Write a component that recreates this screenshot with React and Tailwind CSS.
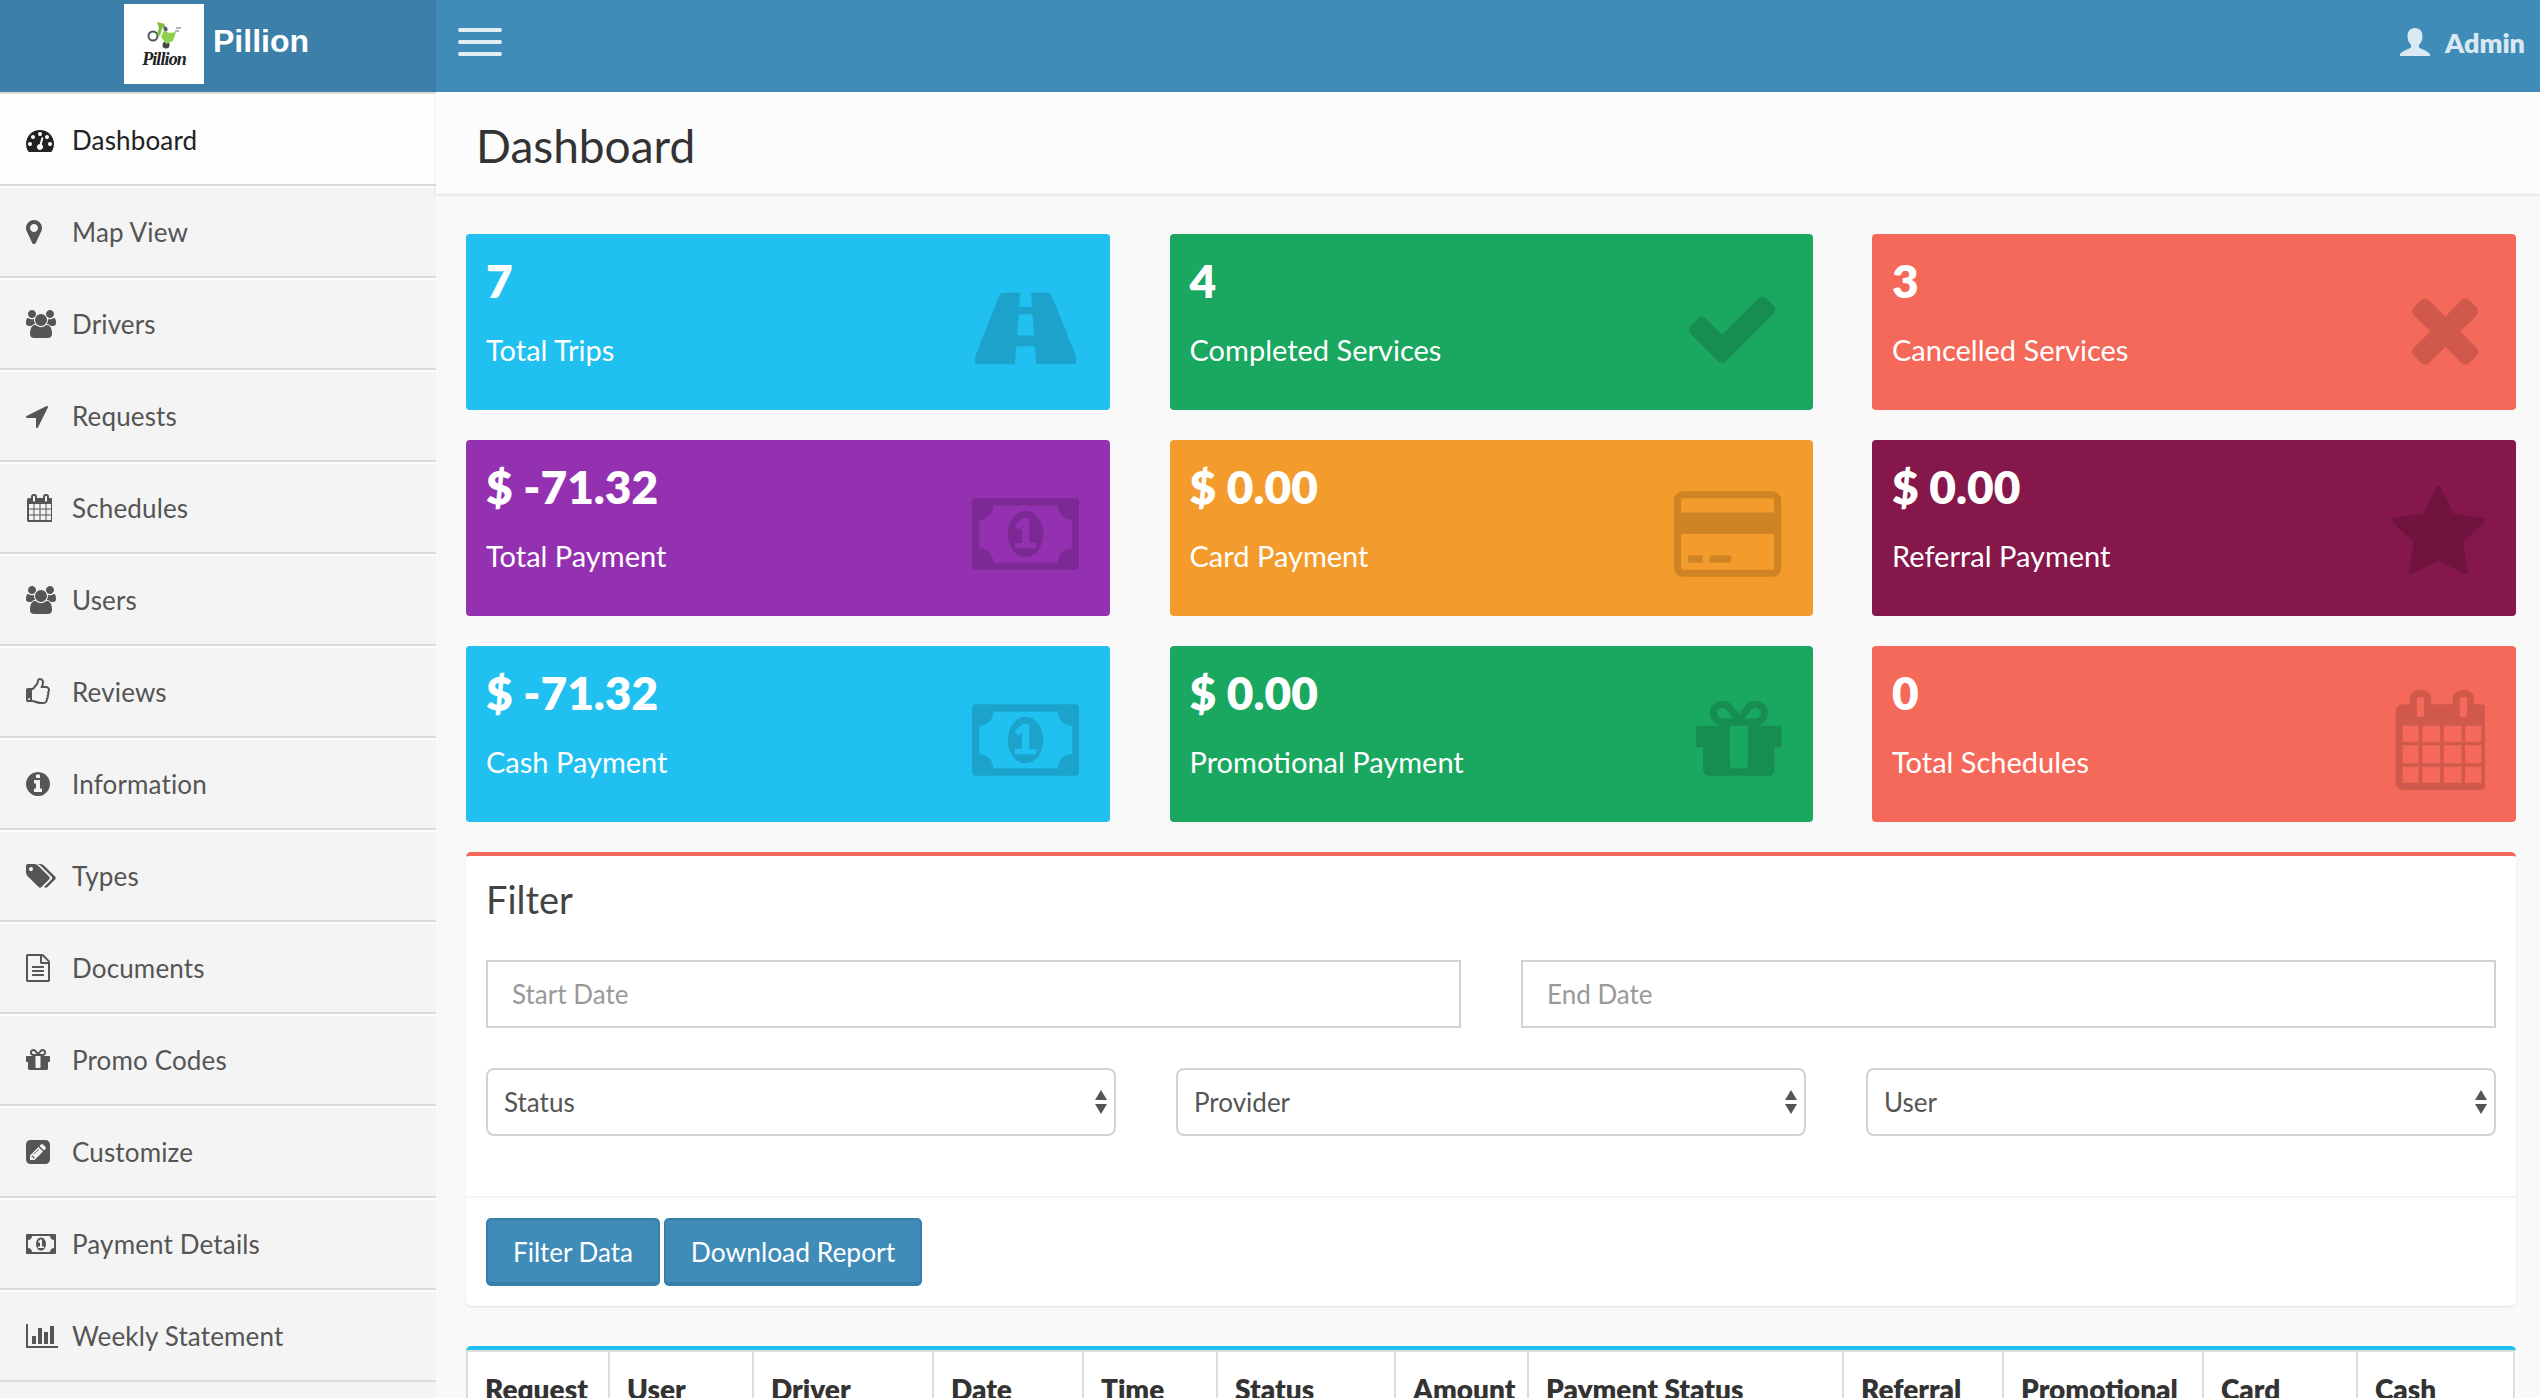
import React from "react";

const P = {
  tach: "M384 1152q0-53-37.5-90.5t-90.5-37.5-90.5 37.5-37.5 90.5 37.5 90.5 90.5 37.5 90.5-37.5 37.5-90.5zm192-448q0-53-37.5-90.5t-90.5-37.5-90.5 37.5-37.5 90.5 37.5 90.5 90.5 37.5 90.5-37.5 37.5-90.5zm428 481l101-382q6-26-7.5-48.5t-38.5-29.5-48 6.5-30 39.5l-101 382q-60 5-107 43.5t-63 98.5q-20 77 20 146t117 89 146-20 89-117q16-60-6-117t-72-91zm660-33q0-53-37.5-90.5t-90.5-37.5-90.5 37.5-37.5 90.5 37.5 90.5 90.5 37.5 90.5-37.5 37.5-90.5zm-640-640q0-53-37.5-90.5t-90.5-37.5-90.5 37.5-37.5 90.5 37.5 90.5 90.5 37.5 90.5-37.5 37.5-90.5zm448 192q0-53-37.5-90.5t-90.5-37.5-90.5 37.5-37.5 90.5 37.5 90.5 90.5 37.5 90.5-37.5 37.5-90.5zm320 448q0 261-141 483-19 29-54 29h-1402q-35 0-54-29-141-221-141-483 0-182 71-348t191-286 286-191 348-71 348 71 286 191 191 286 71 348z",
  marker: "M1152 640q0-106-75-181t-181-75-181 75-75 181 75 181 181 75 181-75 75-181zm256 0q0 109-33 179l-364 774q-16 33-47.5 52t-67.5 19-67.5-19-46.5-52l-365-774q-33-70-33-179 0-212 150-362t362-150 362 150 150 362z",
  users: "M593 896q-162 5-265 128h-134q-82 0-138-40.5t-56-118.5q0-353 124-353 6 0 43.5 21t97.5 42.5 119 21.5q67 0 133-23-5 37-5 66 0 139 81 256zm1071 637q0 120-73 189.5t-194 69.5h-874q-121 0-194-69.5t-73-189.5q0-53 3.5-103.5t14-109 26.5-108.5 43-97.5 62-81 85.5-53.5 111.5-20q10 0 43 21.5t73 48 107 48 135 21.5 135-21.5 107-48 73-48 43-21.5q61 0 111.5 20t85.5 53.5 62 81 43 97.5 26.5 108.5 14 109 3.5 103.5zm-1024-1277q0 106-75 181t-181 75-181-75-75-181 75-181 181-75 181 75 75 181zm704 384q0 159-112.5 271.5t-271.5 112.5-271.5-112.5-112.5-271.5 112.5-271.5 271.5-112.5 271.5 112.5 112.5 271.5zm576 225q0 78-56 118.5t-138 40.5h-134q-103-123-265-128 81-117 81-256 0-29-5-66 66 23 133 23 59 0 119-21.5t97.5-42.5 43.5-21q124 0 124 353zm-128-609q0 106-75 181t-181 75-181-75-75-181 75-181 181-75 181 75 75 181z",
  arrow: "M1593 349l-640 1280q-17 35-57 35-5 0-15-2-22-5-35.5-22.5t-13.5-39.5v-576h-576q-22 0-39.5-13.5t-22.5-35.5 4-42 29-30l1280-640q13-7 29-7 27 0 45 19 15 14 18.5 34.5t-6.5 39.5z",
  calendar: "M192 1664h288v-288h-288v288zm352 0h320v-288h-320v288zm-352-352h288v-320h-288v320zm352 0h320v-320h-320v320zm-352-384h288v-288h-288v288zm736 736h320v-288h-320v288zm-384-736h320v-288h-320v288zm768 736h288v-288h-288v288zm-384-352h320v-320h-320v320zm-352-864v-288q0-13-9.5-22.5t-22.5-9.5h-64q-13 0-22.5 9.5t-9.5 22.5v288q0 13 9.5 22.5t22.5 9.5h64q13 0 22.5-9.5t9.5-22.5zm736 864h288v-320h-288v320zm-384-384h320v-288h-320v288zm384 0h288v-288h-288v288zm32-480v-288q0-13-9.5-22.5t-22.5-9.5h-64q-13 0-22.5 9.5t-9.5 22.5v288q0 13 9.5 22.5t22.5 9.5h64q13 0 22.5-9.5t9.5-22.5zm384-64v1280q0 52-38 90t-90 38h-1408q-52 0-90-38t-38-90v-1280q0-52 38-90t90-38h128v-96q0-66 47-113t113-47h64q66 0 113 47t47 113v96h384v-96q0-66 47-113t113-47h64q66 0 113 47t47 113v96h128q52 0 90 38t38 90z",
  thumb: "M384 1344q0-26-19-45t-45-19-45 19-19 45 19 45 45 19 45-19 19-45zm1152-576q0-51-39-89.5t-89-38.5h-352q0-58 48-159.5t48-160.5q0-98-32-145t-128-47q-26 26-38 85t-30.5 125.5-59.5 109.5q-22 23-77 91-4 5-23 30t-31.5 41-34.5 42.5-40 44-38.5 35.5-40 27-35.5 9h-32v640h32q13 0 31.5 3t33 6.5 38 11 35 11.5 35.5 12.5 29 10.5q211 73 342 73h121q192 0 192-167 0-26-5-56 30-16 47.5-52.5t17.5-73.5-18-69q53-50 53-119 0-25-10-55.5t-25-47.5q32-1 53.5-47t21.5-81zm128-1q0 89-49 163 9 33 9 69 0 77-38 144 3 21 3 43 0 101-60 178 1 139-85 219.5t-227 80.5h-129q-96 0-189.5-22.5t-216.5-65.5q-116-40-138-40h-288q-53 0-90.5-37.5t-37.5-90.5v-640q0-53 37.5-90.5t90.5-37.5h274q36-24 137-155 58-75 107-128 24-25 35.5-85.5t30.5-126.5 62-108q39-37 90-37 84 0 151 32.5t102 101.5 35 186q0 93-48 192h176q104 0 180 76t76 179z",
  info: "M1152 1376v-160q0-14-9-23t-23-9h-96v-512q0-14-9-23t-23-9h-320q-14 0-23 9t-9 23v160q0 14 9 23t23 9h96v320h-96q-14 0-23 9t-9 23v160q0 14 9 23t23 9h448q14 0 23-9t9-23zm-128-896v-160q0-14-9-23t-23-9h-192q-14 0-23 9t-9 23v160q0 14 9 23t23 9h192q14 0 23-9t9-23zm640 416q0 209-103 385.5t-279.5 279.5-385.5 103-385.5-103-279.5-279.5-103-385.5 103-385.5 279.5-279.5 385.5-103 385.5 103 279.5 279.5 103 385.5z",
  tags: "M448 448q0-53-37.5-90.5t-90.5-37.5-90.5 37.5-37.5 90.5 37.5 90.5 90.5 37.5 90.5-37.5 37.5-90.5zm1067 576q0 53-37 90l-491 492q-39 37-91 37-53 0-90-37l-715-716q-38-37-64.5-101t-26.5-117v-416q0-52 38-90t90-38h416q53 0 117 26.5t102 64.5l715 714q37 39 37 91zm384 0q0 53-37 90l-491 492q-39 37-91 37-36 0-59-14t-53-45l470-470q37-37 37-90 0-52-37-91l-715-714q-38-38-102-64.5t-117-26.5h224q53 0 117 26.5t102 64.5l715 714q37 39 37 91z",
  file: "M1596 380q28 28 48 76t20 88v1152q0 40-28 68t-68 28h-1344q-40 0-68-28t-28-68v-1600q0-40 28-68t68-28h896q40 0 88 20t76 48zm-444-244v376h376q-10-29-22-41l-313-313q-12-12-41-22zm384 1528v-1024h-416q-40 0-68-28t-28-68v-416h-768v1536h1280zm-1024-864q0-14 9-23t23-9h704q14 0 23 9t9 23v64q0 14-9 23t-23 9h-704q-14 0-23-9t-9-23v-64zm736 224q14 0 23 9t9 23v64q0 14-9 23t-23 9h-704q-14 0-23-9t-9-23v-64q0-14 9-23t23-9h704zm0 256q14 0 23 9t9 23v64q0 14-9 23t-23 9h-704q-14 0-23-9t-9-23v-64q0-14 9-23t23-9h704z",
  gift: "M1056 1356v-716h-320v716q0 25 18 38.5t46 13.5h192q28 0 46-13.5t18-38.5zm-456-844h195l-126-161q-26-31-69-31-40 0-68 28t-28 68 28 68 68 28zm688-96q0-40-28-68t-68-28q-43 0-69 31l-125 161h194q40 0 68-28t28-68zm376 256v320q0 14-9 23t-23 9h-96v416q0 40-28 68t-68 28h-1088q-40 0-68-28t-28-68v-416h-96q-14 0-23-9t-9-23v-320q0-14 9-23t23-9h440q-93 0-158.5-65.5t-65.5-158.5 65.5-158.5 158.5-65.5q107 0 168 77l128 165 128-165q61-77 168-77 93 0 158.5 65.5t65.5 158.5-65.5 158.5-158.5 65.5h440q14 0 23 9t9 23z",
  pencil: "M404 980l152 152-52 52h-56v-96h-96v-56zm414-390q14 13-3 30l-291 291q-17 17-30 3-14-13 3-30l291-291q17-17 30-3zm-274 690l544-544-288-288-544 544v288h288zm608-608l92-92q28-28 28-68t-28-68l-152-152q-28-28-68-28t-68 28l-92 92zm384-384v960q0 119-84.5 203.5t-203.5 84.5h-960q-119 0-203.5-84.5t-84.5-203.5v-960q0-119 84.5-203.5t203.5-84.5h960q119 0 203.5 84.5t84.5 203.5z",
  money: "M768 1152h384v-96h-128v-448h-114l-148 137 77 80q42-37 55-57h2v288h-128v96zm512-256q0 70-21 142t-59.5 134-101.5 101-138 39-138-39-101.5-101-59.5-134-21-142 21-142 59.5-134 101.5-101 138-39 138 39 101.5 101 59.5 134 21 142zm512 256v-512q-106 0-181-75t-75-181h-1152q0 106-75 181t-181 75v512q106 0 181 75t75 181h1152q0-106 75-181t181-75zm128-832v1152q0 26-19 45t-45 19h-1792q-26 0-45-19t-19-45v-1152q0-26 19-45t45-19h1792q26 0 45 19t19 45z",
  chart: "M640 896v512h-256v-512h256zm384-512v1024h-256v-1024h256zm1024 1152v128h-2048v-1536h128v1408h1920zm-640-896v768h-256v-768h256zm384-384v1152h-256v-1152h256z",
  road: "M1111 1004v-4l-24-320q-1-13-11-22.5t-23-9.5h-186q-13 0-23 9.5t-11 22.5l-24 320v4q-1 12 8 20t21 8h244q12 0 21-8t8-20zm759 467q0 73-46 73h-704q13 0 22-9.5t8-22.5l-20-256q-1-13-11-22.5t-23-9.5h-272q-13 0-23 9.5t-11 22.5l-20 256q-1 13 8 22.5t22 9.5h-704q-46 0-46-73 0-54 26-116l417-1044q8-19 26-33t38-14h339q-13 0-23 9.5t-11 22.5l-15 192q-1 14 8 23t22 9h166q13 0 22-9t8-23l-15-192q-1-13-11-22.5t-23-9.5h339q20 0 38 14t26 33l417 1044q26 62 26 116z",
  check: "M1671 566q0 40-28 68l-724 724-136 136q-28 28-68 28t-68-28l-136-136-362-362q-28-28-28-68t28-68l136-136q28-28 68-28t68 28l294 295 656-657q28-28 68-28t68 28l136 136q28 28 28 68z",
  times: "M1490 1322q0 40-28 68l-136 136q-28 28-68 28t-68-28l-294-294-294 294q-28 28-68 28t-68-28l-136-136q-28-28-28-68t28-68l294-294-294-294q-28-28-28-68t28-68l136-136q28-28 68-28t68 28l294 294 294-294q28-28 68-28t68 28l136 136q28 28 28 68t-28 68l-294 294 294 294q28 28 28 68z",
  star: "M1728 647q0 22-26 48l-363 354 86 500q1 7 1 20 0 21-10.5 35.5t-30.5 14.5q-19 0-40-12l-449-236-449 236q-22 12-40 12-21 0-31.5-14.5t-10.5-35.5q0-6 2-20l86-500-364-354q-25-27-25-48 0-37 56-46l502-73 225-455q19-41 49-41t49 41l225 455 502 73q56 9 56 46z",
  card: "M1760 128q66 0 113 47t47 113v1216q0 66-47 113t-113 47h-1600q-66 0-113-47t-47-113v-1216q0-66 47-113t113-47h1600zm-1600 128q-13 0-22.5 9.5t-9.5 22.5v224h1664v-224q0-13-9.5-22.5t-22.5-9.5h-1600zm1600 1280q13 0 22.5-9.5t9.5-22.5v-608h-1664v608q0 13 9.5 22.5t22.5 9.5h1600zm-1504-128v-128h256v128h-256zm384 0v-128h384v128h-384z",
};

function Glyph({ d, box, h, className }) {
  const [, , w, vh] = box.split(" ").map(Number);
  return (
    <svg viewBox={box} height={h} width={(w / vh) * h} className={className} fill="currentColor">
      <path d={d} />
    </svg>
  );
}

const menu = [
  ["Dashboard", P.tach, "0 0 1792 1792"],
  ["Map View", P.marker, "384 0 1024 1792"],
  ["Drivers", P.users, "0 0 1920 1792"],
  ["Requests", P.arrow, "192 0 1408 1792"],
  ["Schedules", P.calendar, "0 0 1664 1792"],
  ["Users", P.users, "0 0 1920 1792"],
  ["Reviews", P.thumb, "128 0 1536 1792"],
  ["Information", P.info, "128 0 1536 1792"],
  ["Types", P.tags, "0 0 1920 1792"],
  ["Documents", P.file, "128 0 1536 1792"],
  ["Promo Codes", P.gift, "128 0 1536 1792"],
  ["Customize", P.pencil, "0 -128 1536 1792"],
  ["Payment Details", P.money, "0 0 1920 1792"],
  ["Weekly Statement", P.chart, "0 0 2048 1792"],
];

const cards = [
  ["7", "Total Trips", "bg-[#20c0f0]", P.road, "0 0 1920 1792"],
  ["4", "Completed Services", "bg-[#1aa760]", P.check, "0 0 1792 1792"],
  ["3", "Cancelled Services", "bg-[#f5695a]", P.times, "192 0 1408 1792"],
  ["$ -71.32", "Total Payment", "bg-[#9331b0]", P.money, "0 0 1920 1792"],
  ["$ 0.00", "Card Payment", "bg-[#f39b2c]", P.card, "0 0 1920 1792"],
  ["$ 0.00", "Referral Payment", "bg-[#85174a]", P.star, "64 0 1664 1792"],
  ["$ -71.32", "Cash Payment", "bg-[#20c0f0]", P.money, "0 0 1920 1792"],
  ["$ 0.00", "Promotional Payment", "bg-[#1aa760]", P.gift, "128 0 1536 1792"],
  ["0", "Total Schedules", "bg-[#f5695a]", P.calendar, "0 0 1664 1792"],
];

const cols = [
  ["Request", "w-[142px]"],
  ["User", "w-[144px]"],
  ["Driver", "w-[180px]"],
  ["Date", "w-[150px]"],
  ["Time", "w-[134px]"],
  ["Status", "w-[178px]"],
  ["Amount", "w-[133px]"],
  ["Payment Status", "w-[315px]"],
  ["Referral", "w-[160px]"],
  ["Promotional", "w-[200px]"],
  ["Card", "w-[154px]"],
  ["Cash", "w-[157px]"],
];

function Select({ label }) {
  return (
    <div className="relative">
      <select className="block h-[68px] w-full appearance-none rounded-lg border-2 border-[#d2d2d2] bg-white pl-[16px] text-[26px] text-[#555]">
        <option>{label}</option>
      </select>
      <svg viewBox="0 0 14 24" width="14" height="24" className="pointer-events-none absolute right-[8px] top-[22px] text-[#555]" fill="currentColor">
        <path d="M7 0l6 10H1zM1 14h12L7 24z" />
      </svg>
    </div>
  );
}

function Logo() {
  return (
    <div className="flex h-[80px] w-[80px] flex-col items-center bg-white pt-[17px]">
      <svg viewBox="0 0 36 30" width="36" height="30">
        <circle cx="7" cy="15" r="4.5" fill="none" stroke="#555" strokeWidth="2" />
        <circle cx="20" cy="24" r="3.5" fill="#444" />
        <path d="M11 1l8 2-3 5-2 7-3-2 2-6z" fill="#7cbf3f" />
        <path d="M15 16l3-7 3 2 3 1 6-1-3 9-7 3z" fill="#8fd14f" />
        <path d="M18 5l3 2v3l-3-1zM30 7h5M29 10h4" stroke="#666" strokeWidth="1" fill="#555" />
      </svg>
      <span className="-mt-[2px] font-['Liberation_Serif',serif] text-[18px] font-bold italic leading-[20px] tracking-[-0.9px] text-[#222]">
        Pillion
      </span>
    </div>
  );
}

export default function App() {
  return (
    <div className="flex h-screen flex-col overflow-hidden bg-[#f9f9f9] font-['Lato','Noto_Sans',sans-serif]">
      <header className="flex h-[92px] shrink-0 bg-[#3f8cb9]">
        <div className="flex w-[436px] shrink-0 items-start gap-[9px] bg-[#3c80aa] pl-[124px] pt-[4px]">
          <Logo />
          <span className="font-['Liberation_Sans',sans-serif] text-[32px] font-bold leading-[74px] text-white">Pillion</span>
        </div>
        <div className="flex flex-1 items-center justify-between pl-[22px] pr-[15px]">
          <div className="flex w-[44px] flex-col gap-[8px] pb-[8px]">
            <div className="h-[4px] rounded bg-white/85" />
            <div className="h-[4px] rounded bg-white/85" />
            <div className="h-[4px] rounded bg-white/85" />
          </div>
          <div className="flex items-center gap-[15px] pb-[8px] text-[#d9e8f1]">
            <svg viewBox="0 0 30 28" width="30" height="28" fill="currentColor">
              <path d="M15 0c5 0 7.500 3.500 7.500 8.500 0 3.500-1.500 6.500-3.500 8.500v2.500c2 1.500 8 3 11 6.500v2H0v-2c3-3.500 9-5 11-6.500V17c-2-2-3.500-5-3.500-8.500C7.500 3.500 10 0 15 0z" />
            </svg>
            <span className="text-[27px] font-extrabold leading-none">Admin</span>
          </div>
        </div>
      </header>

      <div className="flex min-h-0 flex-1">
        <aside className="w-[436px] shrink-0 overflow-hidden border-t-2 border-[#dbdbdb] bg-[#f4f4f4]">
          <ul>
            {menu.map(([label, d, box], i) => (
              <li
                key={label}
                className={`flex h-[92px] items-center border-t-2 border-b-2 border-t-white border-b-[#dbdbdb] pl-[26px] ${i === 0 ? "border-t-[#fdfdfd] bg-[#fdfdfd] text-[#222]" : "text-[#555]"}`}
              >
                <span className="flex w-[46px] shrink-0 items-center">
                  <Glyph d={d} box={box} h={28} />
                </span>
                <span className="text-[26px] leading-none tracking-[0.15px]">{label}</span>
              </li>
            ))}
          </ul>
        </aside>

        <main className="min-w-0 flex-1">
          <div className="flex h-[102px] items-center bg-[#fcfcfc] pl-[40px] pt-[6px] shadow-[0_1px_3px_rgba(0,0,0,0.12)]">
            <h1 className="text-[46px] font-normal leading-none text-[#333]">Dashboard</h1>
          </div>

          <div className="pl-[30px] pr-[24px] pt-[40px]">
            <div className="grid grid-cols-[644px_643px_644px] gap-x-[59.500px] gap-y-[30px]">
              {cards.map(([value, label, bg, d, box], i) => (
                <div key={i} className={`relative h-[176px] rounded-[4px] ${bg} px-[20px] pt-[18px] text-white`}>
                  <div className="text-[46px] font-extrabold leading-[58px]">{value}</div>
                  <div className="mt-[22px] text-[29px] leading-[36px]">{label}</div>
                  <Glyph d={d} box={box} h={100} className="absolute right-[31px] top-[44px] text-black/15" />
                </div>
              ))}
            </div>

            <section className="mt-[30px] rounded-[5px] border-t-4 border-[#f5695a] bg-white shadow-[0_1px_2px_rgba(0,0,0,0.1)]">
              <div className="px-[20px] pt-[22px]">
                <h2 className="text-[38px] font-normal leading-[42px] text-[#444]">Filter</h2>
                <div className="mt-[40px] grid grid-cols-2 gap-x-[60px]">
                  <input placeholder="Start Date" className="h-[68px] border-2 border-[#d2d2d2] bg-white pl-[24px] text-[26px] placeholder:text-[#999]" />
                  <input placeholder="End Date" className="h-[68px] border-2 border-[#d2d2d2] bg-white pl-[24px] text-[26px] placeholder:text-[#999]" />
                </div>
                <div className="mt-[40px] grid grid-cols-3 gap-x-[60px] pb-[60px]">
                  <Select label="Status" />
                  <Select label="Provider" />
                  <Select label="User" />
                </div>
              </div>
              <div className="flex gap-[4px] border-t-2 border-[#f4f4f4] px-[20px] py-[20px]">
                <button className="h-[68px] w-[174px] rounded-[5px] border-2 border-b-4 border-[#367fa9] bg-[#3f8cb9] pt-[3px] text-[26px] text-white">Filter Data</button>
                <button className="h-[68px] w-[258px] rounded-[5px] border-2 border-b-4 border-[#367fa9] bg-[#3f8cb9] pt-[3px] text-[26.400px] text-white">Download Report</button>
              </div>
            </section>

            <section className="mt-[40px] rounded-[5px] border-t-4 border-[#20c0f0] bg-white">
              <table className="table-fixed border-collapse">
                <colgroup>
                  {cols.map(([h, w]) => (
                    <col key={h} className={w} />
                  ))}
                </colgroup>
                <thead>
                  <tr>
                    {cols.map(([h]) => (
                      <th key={h} className="h-[76px] whitespace-nowrap border-2 border-[#ddd] pl-[17px] text-left text-[28px] font-extrabold text-[#333]">
                        {h}
                      </th>
                    ))}
                  </tr>
                </thead>
              </table>
            </section>
          </div>
        </main>
      </div>
    </div>
  );
}
